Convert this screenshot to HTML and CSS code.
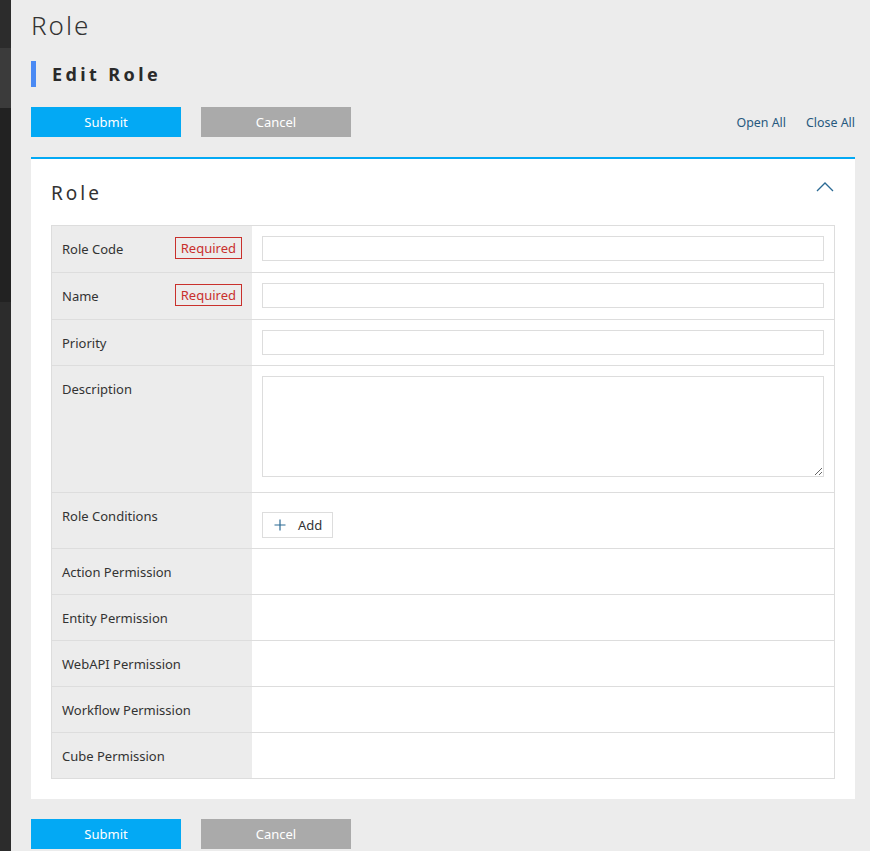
FILE: index.html
```html
<!DOCTYPE html>
<html>
<head>
<meta charset="utf-8">
<link rel="stylesheet" href="styles.css">
</head>
<body>
<div class="app">
  <aside class="side">
    <div class="s1"></div><div class="s2"></div><div class="s3"></div><div class="s4"></div>
  </aside>
  <main class="main">
    <h1 class="page-title">Role</h1>
    <h2 class="sub-title">Edit Role</h2>
    <div class="toolbar">
      <button class="btn btn-submit">Submit</button>
      <button class="btn btn-cancel">Cancel</button>
      <div class="links"><a>Open All</a><a>Close All</a></div>
    </div>
    <section class="panel">
      <div class="panel-head">
        <h3>Role</h3>
        <svg class="chev" width="18" height="10" viewBox="0 0 18 10"><path d="M1 9 L9 1 L17 9" fill="none" stroke="#2b6a94" stroke-width="1.3"/></svg>
      </div>
      <div class="form">
        <div class="row r47"><div class="lbl"><span>Role Code</span><span class="req">Required</span></div><div class="val"><input class="inp"></div></div>
        <div class="row r47"><div class="lbl"><span>Name</span><span class="req">Required</span></div><div class="val"><input class="inp"></div></div>
        <div class="row"><div class="lbl"><span>Priority</span></div><div class="val"><input class="inp"></div></div>
        <div class="row"><div class="lbl"><span>Description</span></div><div class="val"><textarea class="ta"></textarea></div></div>
        <div class="row"><div class="lbl"><span>Role Conditions</span></div><div class="val val-add"><button class="add"><svg width="12" height="12" viewBox="0 0 12 12"><path d="M6 0.5V11.5M0.5 6H11.5" stroke="#2b6a94" stroke-width="1.2"/></svg><span>Add</span></button></div></div>
        <div class="row"><div class="lbl"><span>Action Permission</span></div><div class="val"></div></div>
        <div class="row"><div class="lbl"><span>Entity Permission</span></div><div class="val"></div></div>
        <div class="row"><div class="lbl"><span>WebAPI Permission</span></div><div class="val"></div></div>
        <div class="row"><div class="lbl"><span>Workflow Permission</span></div><div class="val"></div></div>
        <div class="row last"><div class="lbl"><span>Cube Permission</span></div><div class="val"></div></div>
      </div>
    </section>
    <div class="toolbar bottom">
      <button class="btn btn-submit">Submit</button>
      <button class="btn btn-cancel">Cancel</button>
    </div>
  </main>
</div>
</body>
</html>
```

FILE: styles.css
```css
* { box-sizing: border-box; }
html, body { margin: 0; padding: 0; height: 100%; }
body {
  font-family: "Noto Sans", "Open Sans", sans-serif;
  font-size: 13px;
  color: #333;
  background: #ececec;
  overflow: hidden;
}
.app { display: flex; height: 851px; }
.side { width: 11px; flex: none; display: flex; flex-direction: column; }
.s1 { height: 48px; background: #2c2c2c; }
.s2 { height: 60px; background: #3b3b3b; }
.s3 { height: 194px; background: #222222; }
.s4 { flex: 1; background: #2c2c2c; }
.main { flex: 1; padding: 0 15px 0 20px; background: #ececec; }
.page-title {
  margin: 0; padding-top: 9px; height: 48px;
  font-weight: 300; font-size: 26px; letter-spacing: 2px; line-height: 32px;
  color: #333;
}
.sub-title {
  margin: 13px 0 0; height: 26px;
  border-left: 5px solid #4a8af4;
  padding-left: 16px;
  font-size: 18px; font-weight: 700; letter-spacing: 3.4px; line-height: 26px;
  color: #2a2a2a;
}
.toolbar { display: flex; align-items: center; gap: 20px; margin-top: 20px; height: 30px; }
.btn {
  width: 150px; height: 30px; border: none; color: #fff;
  font-family: inherit; font-size: 13px; padding: 0; cursor: pointer;
}
.btn-submit { background: #03a9f4; }
.btn-cancel { background: #aaaaaa; }
.links { margin-left: auto; display: flex; gap: 20px; }
.links a { color: #27597e; font-size: 12.4px; }
.panel {
  margin-top: 20px; background: #fff; border-top: 2px solid #03a9f4;
  padding: 0 20px 20px;
}
.panel-head { display: flex; justify-content: space-between; align-items: flex-start; height: 66px; }
.panel-head h3 {
  margin: 0; padding-top: 22px; font-weight: 400; font-size: 19px; letter-spacing: 3px; line-height: 24px; color: #333;
}
.chev { margin-top: 23px; margin-right: 1px; }
.form { border: 1px solid #dddddd; }
.row { display: flex; border-bottom: 1px solid #dddddd; }
.row.last { border-bottom: none; }
.lbl {
  width: 200px; flex: none; background: #ececec;
  padding: 15px 10px 14px; line-height: 16px;
  display: flex; justify-content: space-between; align-items: flex-start;
}
.r47 .lbl { padding-top: 11px; padding-bottom: 13px; }
.r47 .lbl span:first-child { padding-top: 4px; }
.req {
  border: 1px solid #c9302c; color: #c9302c; padding: 2px 5px; line-height: 16px;
}
.val { flex: 1; padding: 10px; }
.inp {
  display: block; width: 100%; height: 25px; border: 1px solid #dddddd; background: #fff; margin: 0;
}
.ta {
  display: block; width: 100%; height: 101px; border: 1px solid #dddddd; margin: 0 0 5px; resize: vertical;
  font-family: inherit;
}
.val-add { padding-top: 19px; }
.add {
  display: flex; align-items: center; gap: 12px;
  height: 26px; padding: 0 10px 0 11px; background: #fff; border: 1px solid #dddddd;
  font-family: inherit; font-size: 13px; color: #333;
}
.bottom { margin-top: 20px; }
```
